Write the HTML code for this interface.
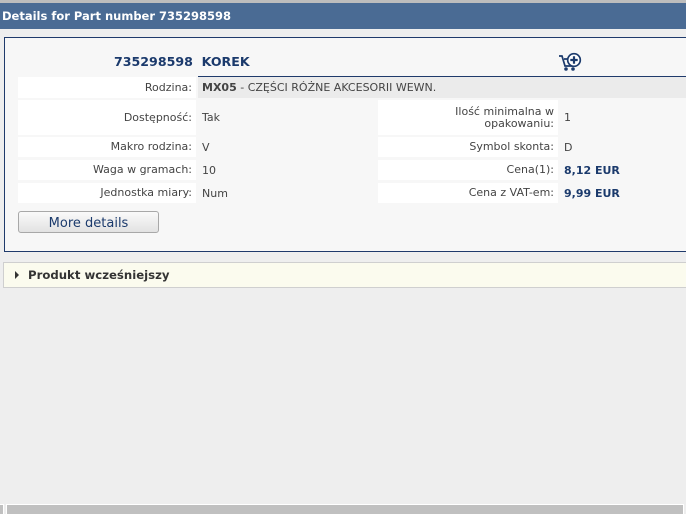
<!DOCTYPE html>
<html><head><meta charset="utf-8"><style>
*{margin:0;padding:0;box-sizing:border-box}
body{width:686px;height:514px;background:#eeeeee;font-family:"DejaVu Sans",Verdana,sans-serif;font-size:11px;color:#444;position:relative;overflow:hidden}
.abs{position:absolute}
.top{left:0;top:0;width:686px;height:3px;background:#bdbdbd}
.hdr{left:0;top:3px;width:686px;height:26px;background:#4a6b94;color:#fff;font-weight:bold;font-size:11.5px;line-height:27px;padding-left:2px}
.box{left:4px;top:37px;width:700px;height:215px;background:#f7f7f7;border:1px solid #1f3a6b}
.lab{background:#fff;text-align:right;padding-right:4px;display:flex;align-items:center;justify-content:flex-end;line-height:12px}
.val{display:flex;align-items:center}
.b{font-weight:bold;color:#1b3a6c}
</style></head><body>
<div class="abs top"></div>
<div class="abs hdr">Details for Part number 735298598</div>
<div class="abs box"></div>
<div class="abs b" style="left:114px;top:54px;font-size:12.6px;">735298598&nbsp; KOREK</div>
<svg class="abs" style="left:557px;top:50px" width="28" height="24" viewBox="0 0 28 24">
<path d="M2 6h3l3 10h9l2-7H7" fill="none" stroke="#1b3a6c" stroke-width="1.7"/>
<circle cx="9" cy="19" r="1.8" fill="#1b3a6c"/><circle cx="16" cy="19" r="1.8" fill="#1b3a6c"/>
<circle cx="17" cy="10" r="6.3" fill="#fff" stroke="#1b3a6c" stroke-width="1.7"/>
<path d="M17 6.3v7.4M13.3 10h7.4" stroke="#1b3a6c" stroke-width="2.2"/>
</svg>
<div class="abs" style="left:198px;top:76px;width:488px;height:1px;background:#1f3a6b"></div>
<div class="abs lab" style="left:18px;top:77px;width:178px;height:21px">Rodzina:</div>
<div class="abs val" style="left:198px;top:77px;width:488px;height:21px;background:#ebebeb;padding-left:4px"><b style="color:#444">MX05</b>&nbsp;- CZĘŚCI RÓŻNE AKCESORII WEWN.</div>

<div class="abs lab" style="left:18px;top:100px;width:178px;height:35px">Dostępność:</div>
<div class="abs val" style="left:202px;top:100px;height:35px">Tak</div>
<div class="abs lab" style="left:378px;top:100px;width:180px;height:35px">Ilość minimalna w<br>opakowaniu:</div>
<div class="abs val" style="left:564px;top:100px;height:35px">1</div>

<div class="abs lab" style="left:18px;top:137px;width:178px;height:20px">Makro rodzina:</div>
<div class="abs val" style="left:202px;top:137px;height:20px">V</div>
<div class="abs lab" style="left:378px;top:137px;width:180px;height:20px">Symbol skonta:</div>
<div class="abs val" style="left:564px;top:137px;height:20px">D</div>

<div class="abs lab" style="left:18px;top:160px;width:178px;height:20px">Waga w gramach:</div>
<div class="abs val" style="left:202px;top:160px;height:20px">10</div>
<div class="abs lab" style="left:378px;top:160px;width:180px;height:20px">Cena(1):</div>
<div class="abs val b" style="left:564px;top:160px;height:20px">8,12 EUR</div>

<div class="abs lab" style="left:18px;top:183px;width:178px;height:20px">Jednostka miary:</div>
<div class="abs val" style="left:202px;top:183px;height:20px">Num</div>
<div class="abs lab" style="left:378px;top:183px;width:180px;height:20px">Cena z VAT-em:</div>
<div class="abs val b" style="left:564px;top:183px;height:20px">9,99 EUR</div>

<div class="abs" style="left:18px;top:211px;width:141px;height:22px;border:1px solid #a8a8a8;border-radius:3px;background:linear-gradient(#fafafa,#e2e2e2);color:#1b3a6c;font-size:13px;text-align:center;line-height:23px">More details</div>

<div class="abs" style="left:3px;top:262px;width:690px;height:26px;background:#fbfbee;border:1px solid #cfcfcf;font-weight:bold;color:#333;font-size:11.7px;line-height:25px;padding-left:24px">Produkt wcześniejszy</div>
<div class="abs" style="left:15px;top:271px;width:0;height:0;border-left:4px solid #333;border-top:4px solid transparent;border-bottom:4px solid transparent"></div>

<div class="abs" style="left:0;top:504px;width:4px;height:10px;background:#c0c0c0;border:1px solid #fff;border-left:none;border-bottom:none"></div>
<div class="abs" style="left:6px;top:504px;width:678px;height:10px;background:#c0c0c0;border:1px solid #fff;border-bottom:none"></div>
</body></html>
